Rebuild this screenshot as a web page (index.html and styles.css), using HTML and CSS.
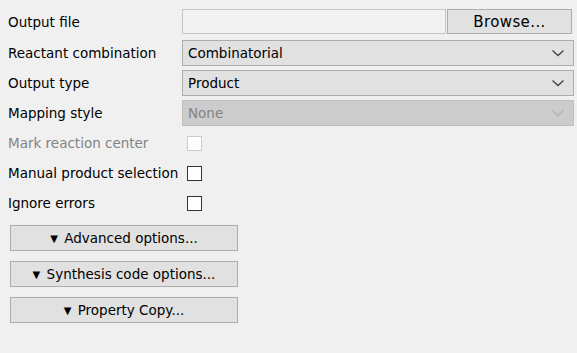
FILE: index.html
```html
<!DOCTYPE html>
<html lang="en">
<head>
  <meta charset="UTF-8" />
  <title>Reaction Enumeration Options</title>
  <link rel="stylesheet" href="styles.css">
</head>
<body>
  <div class="panel">
    <div class="row row-file">
      <label class="label">Output file</label>
      <div class="file-field">
        <div class="text-input"></div>
        <button class="btn browse-btn" type="button">Browse...</button>
      </div>
    </div>

    <div class="row">
      <label class="label">Reactant combination</label>
      <div class="combo">
        <span>Combinatorial</span>
        <svg class="chevron" width="12" height="7" viewBox="0 0 12 7"><path d="M0.5 0.5 L6 5.5 L11.5 0.5" fill="none" stroke="currentColor" stroke-width="1.3"/></svg>
      </div>
    </div>

    <div class="row">
      <label class="label">Output type</label>
      <div class="combo">
        <span>Product</span>
        <svg class="chevron" width="12" height="7" viewBox="0 0 12 7"><path d="M0.5 0.5 L6 5.5 L11.5 0.5" fill="none" stroke="currentColor" stroke-width="1.3"/></svg>
      </div>
    </div>

    <div class="row">
      <label class="label">Mapping style</label>
      <div class="combo disabled">
        <span>None</span>
        <svg class="chevron" width="12" height="7" viewBox="0 0 12 7"><path d="M0.5 0.5 L6 5.5 L11.5 0.5" fill="none" stroke="currentColor" stroke-width="1.3"/></svg>
      </div>
    </div>

    <div class="check-row disabled">
      <label class="label">Mark reaction center</label>
      <span class="checkbox"></span>
    </div>
    <div class="check-row">
      <label class="label">Manual product selection</label>
      <span class="checkbox"></span>
    </div>
    <div class="check-row">
      <label class="label">Ignore errors</label>
      <span class="checkbox"></span>
    </div>

    <div class="toggles">
      <button class="btn toggle-btn" type="button"><span class="tri">&#9660;</span> Advanced options...</button>
      <button class="btn toggle-btn" type="button"><span class="tri">&#9660;</span> Synthesis code options...</button>
      <button class="btn toggle-btn" type="button"><span class="tri">&#9660;</span> Property Copy...</button>
    </div>
  </div>
</body>
</html>
```

FILE: styles.css
```css
body {
  margin: 0;
  background: #f0f0f0;
  font-family: "DejaVu Sans", Verdana, sans-serif;
  font-size: 13.5px;
  color: #000;
}

.panel {
  display: flex;
  flex-direction: column;
  padding: 9px 3px 0 8px;
}

.row {
  display: grid;
  grid-template-columns: 174px 1fr;
  align-items: center;
  height: 26px;
  margin-top: 4px;
}

.row-file {
  height: 25px;
  margin-top: 0;
  margin-bottom: 2px;
}

.label {
  white-space: nowrap;
}

.file-field {
  display: flex;
  gap: 1px;
  height: 25px;
  margin-right: 2px;
}

.text-input {
  flex: 1;
  background: #f2f2f2;
  border: 1px solid #c6c6c6;
}

.btn {
  font-family: inherit;
  font-size: 13.5px;
  color: #000;
  background: #e1e1e1;
  border: 1px solid #adadad;
  padding: 0;
  cursor: pointer;
}

.browse-btn {
  width: 125px;
  font-size: 15px;
  letter-spacing: 0.4px;
}

.combo {
  height: 26px;
  box-sizing: border-box;
  display: flex;
  align-items: center;
  justify-content: space-between;
  padding: 0 9px 0 5px;
  background: #e1e1e1;
  border: 1px solid #adadad;
  color: #000;
}

.combo .chevron {
  color: #444;
}

.combo.disabled {
  background: #cccccc;
  border-color: #bfbfbf;
  color: #838383;
}

.combo.disabled .chevron {
  color: #b4b4b4;
}

.check-row {
  display: grid;
  grid-template-columns: 179px 1fr;
  align-items: center;
  height: 30px;
}

.check-row.disabled {
  margin-top: 2px;
  color: #838383;
}

.checkbox {
  width: 13px;
  height: 13px;
  background: #fff;
  border: 1px solid #333;
}

.check-row.disabled .checkbox {
  border-color: #cccccc;
}

.toggles {
  display: flex;
  flex-direction: column;
  gap: 10px;
  margin-top: 7px;
  padding-left: 2px;
}

.toggle-btn {
  width: 228px;
  height: 26px;
}

.tri {
  font-size: 10px;
  vertical-align: 1px;
  margin-right: 2px;
}
```
